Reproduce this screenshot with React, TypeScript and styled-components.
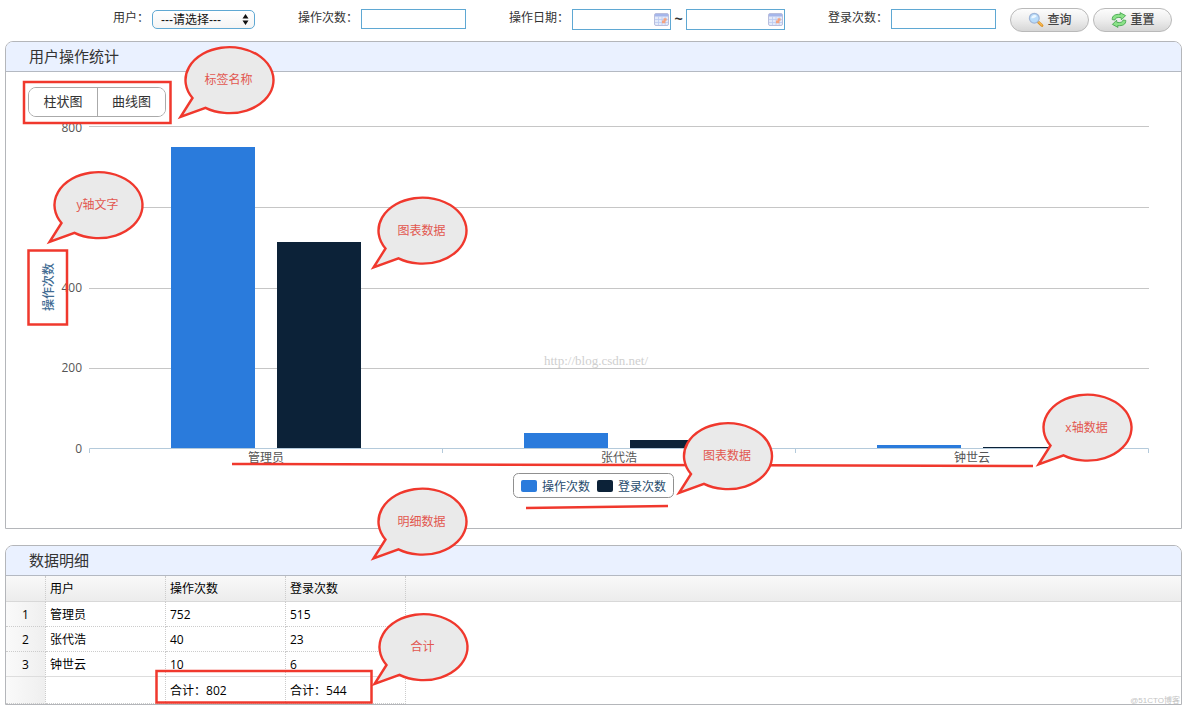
import React from "react";
import styled, { createGlobalStyle } from "styled-components";

const cjk = '"Noto Sans CJK SC", sans-serif';

const GlobalStyle = createGlobalStyle`
  * { box-sizing: border-box; }
  body {
    margin: 0;
    background: #fff;
    color: #333;
    font: 12px/18px "Liberation Sans", ${cjk};
  }
  button, input, select { font: inherit; color: inherit; }
`;

const Page = styled.main`
  display: flex;
  flex-direction: column;
  padding: 0 2px 0 5px;
`;

const FilterBar = styled.form`
  display: flex;
  flex-wrap: wrap;
  align-items: center;
  column-gap: 43px;
  min-height: 41px;
  padding: 0 0 3px 108px;
`;

const Field = styled.div`
  display: flex;
  align-items: center;
  gap: 3px;
`;

const FieldLabel = styled.label`
  padding-bottom: 2px;
  white-space: nowrap;
`;

const TextInput = styled.input`
  width: 105px;
  height: 20px;
  padding: 0 4px;
  border: 1px solid #5fa8d3;
  background: #fff;
  outline: none;
`;

const SelectWrap = styled.div`
  position: relative;
`;

const Select = styled.select`
  display: block;
  width: 103px;
  height: 19px;
  padding: 1px 16px 0 8px;
  border: 1px solid #5fa8d3;
  border-radius: 5px;
  background: linear-gradient(#fff, #f4f4f4);
  color: #111;
  line-height: 16px;
  appearance: none;
`;

const SelectArrows = styled.svg`
  position: absolute;
  top: 4px;
  right: 6px;
  pointer-events: none;
`;

const DateBox = styled.div`
  display: flex;
  align-items: center;
  width: 99px;
  height: 21px;
  padding-right: 1px;
  border: 1px solid #5fa8d3;
`;

const DateInput = styled.input`
  flex: 1;
  min-width: 0;
  height: 18px;
  padding: 0 4px;
  border: 0;
  background: transparent;
  outline: none;
`;

const IconButton = styled.button`
  display: flex;
  padding: 0;
  border: 0;
  background: none;
`;

const Tilde = styled.span`
  width: 9px;
  text-align: center;
  font-size: 14px;
  font-weight: bold;
`;

const LastGroup = styled.div`
  display: flex;
  align-items: center;
  gap: 14px;
`;

const Actions = styled.div`
  display: flex;
  gap: 4px;
  padding-top: 1px;
`;

const PillButton = styled.button`
  display: flex;
  align-items: center;
  justify-content: center;
  gap: 4px;
  width: 79px;
  height: 24px;
  padding: 0;
  border: 1px solid #b9b9b9;
  border-radius: 12px;
  background: linear-gradient(#fdfdfd, #ededed 50%, #d6d6d6);
  color: #444;
  font-weight: 500;
`;

const Panel = styled.section`
  position: relative;
  border: 1px solid #b4b6ba;
  border-radius: 8px 8px 0 0;
  background: #fff;

  & + & { margin-top: 16px; }
`;

const PanelTitle = styled.h2`
  margin: 0;
  height: 30px;
  padding-left: 23px;
  border-bottom: 1px solid #b4b9c2;
  border-radius: 7px 7px 0 0;
  background: #eaf1ff;
  font-size: 15px;
  font-weight: 400;
  line-height: 30px;
`;

const ChartBody = styled.div`
  padding-top: 15px;
`;

const Tabs = styled.div`
  display: inline-flex;
  margin-left: 22px;
  border: 1px solid #aaa;
  border-radius: 8px;
  overflow: hidden;
  vertical-align: top;
`;

const Tab = styled.button`
  width: 68px;
  height: 28px;
  padding: 0;
  border: 0;
  background: #fff;
  font-size: 13px;

  & + & { border-left: 1px solid #aaa; }
`;

const Chart = styled.svg`
  position: relative;
  z-index: 1;
  display: block;
  width: 100%;
  height: auto;
  overflow: visible;
  pointer-events: none;
`;

const AxisText = styled.text`
  fill: #555;
  font: 12px "Open Sans", ${cjk};
`;

const AxisTitle = styled.text`
  fill: #416b92;
  font: 500 12px ${cjk};
`;

const LegendText = styled.text`
  fill: #274b6d;
  font: 12px ${cjk};
`;

const CalloutText = styled.text`
  fill: #e2574f;
  font: 12px "Open Sans", ${cjk};
`;

const SiteMark = styled.text`
  fill: #cfcfcf;
  font: 13px "Liberation Serif", serif;
`;

const DataTable = styled.table`
  width: 100%;
  border-collapse: separate;
  border-spacing: 0;
  table-layout: fixed;
  color: #000;
  font-family: "Open Sans", ${cjk};
  line-height: 18px;
`;

const HeadCell = styled.th`
  height: 26px;
  padding: 0 4px;
  border-right: 1px dotted #ccc;
  border-bottom: 1px solid #d8d8d8;
  background: linear-gradient(#f9f9f9, #ececec);
  font-weight: 400;
  text-align: left;

  &:last-child { border-right: 0; }
`;

const Cell = styled.td<{ $last?: boolean }>`
  height: 25px;
  padding: 2px 4px 0;
  border-right: 1px dotted #ccc;
  border-bottom: 1px ${(p) => (p.$last ? "solid #ddd" : "dotted #ccc")};

  tfoot & { height: 27px; }
`;

const IndexCell = styled(Cell)`
  background: linear-gradient(90deg, #fafafa, #efefef);
  text-align: center;
`;

const RestCell = styled.td<{ $last?: boolean }>`
  padding: 0;
  border-bottom: ${(p) => (p.$last ? "1px solid #ddd" : "0")};
`;

const TotalsMarkup = styled.svg`
  position: absolute;
  top: 0;
  left: 0;
  overflow: visible;
  pointer-events: none;
`;

const CornerMark = styled.span`
  position: absolute;
  right: 1px;
  bottom: -4px;
  color: #c4c4c4;
  font-size: 8px;
  line-height: 14px;
`;

const RED = "#f0382d";
const BLUE = "#2a7bdc";
const NAVY = "#0c2238";

const users = [
  { name: "管理员", ops: 752, logins: 515 },
  { name: "张代浩", ops: 40, logins: 23 },
  { name: "钟世云", ops: 10, logins: 6 },
];
const totalOps = users.reduce((sum, u) => sum + u.ops, 0);
const totalLogins = users.reduce((sum, u) => sum + u.logins, 0);

const plot = { left: 89, right: 1149, top: 126, bottom: 448 };
const band = Math.floor((plot.right - plot.left) / users.length);
const unit = (plot.bottom - plot.top) / 800;
const barHeight = (v: number) => Math.max(1, Math.floor(v * unit - 0.9));

function Callout({ x, y, text }: { x: number; y: number; text: string }) {
  return (
    <g transform={`translate(${x} ${y})`}>
      <path
        d="M-36 18A44 33 0 1 1 -23 27.8L-48 37Z"
        fill="#eaeaea"
        stroke={RED}
        strokeWidth="2.4"
        strokeMiterlimit="8"
      />
      <CalloutText textAnchor="middle" y="4">{text}</CalloutText>
    </g>
  );
}

function CalendarIcon() {
  return (
    <svg width="15" height="13" viewBox="0 0 15 13">
      <rect x=".5" y=".5" width="14" height="12" rx="1.5" fill="#e3eafa" stroke="#b9bedd" />
      <path d="M1 1h13v2.5H1z" fill="#a5b6ea" />
      <path d="M1 6.5h13M1 9.5h13M4.5 3.5V12M8 3.5V12M11.2 3.5V12" stroke="#bccaf0" strokeWidth=".8" />
      <path d="M9.6 5.2h3v2.6h-1.2v2.4H8V7.6h1.6z" fill="#f4a381" />
    </svg>
  );
}

function SearchIcon() {
  return (
    <svg width="16" height="16" viewBox="0 0 16 16">
      <path d="M10.2 10l3.8 3.6" stroke="#d9922b" strokeWidth="2.8" strokeLinecap="round" />
      <path d="M10.6 10l3.2 3" stroke="#f8b84c" strokeWidth="1.5" strokeLinecap="round" />
      <circle cx="6.3" cy="6.2" r="4.9" fill="#b9dcfa" stroke="#9fb6d8" strokeWidth="1.2" />
      <path d="M3.2 6.2a3.3 3.3 0 0 1 5.6-2.3C7.5 5.6 5.6 6.3 3.2 6.2z" fill="#ecf7ff" />
    </svg>
  );
}

function ResetIcon() {
  return (
    <svg width="16" height="16" viewBox="0 0 16 16" fill="#8be388" stroke="#4aa654" strokeWidth=".9" strokeLinejoin="round">
      <path d="M1.2 7.6C1 3.6 4.4 1.9 9.4 2.4L9 .6l5.6 3-4.2 4.2-.3-2.2C6.6 5.2 4.4 5.6 3.9 8z" />
      <path d="M14.8 8.4c.2 4-3.2 5.7-8.2 5.2l.4 1.8-5.6-3 4.2-4.2.3 2.2c3.5.4 5.700 0 6.200-2.400z" />
    </svg>
  );
}

function DateField({ id, label }: { id: string; label: string }) {
  return (
    <DateBox>
      <DateInput id={id} type="text" aria-label={label} />
      <IconButton type="button" aria-label="选择日期"><CalendarIcon /></IconButton>
    </DateBox>
  );
}

function Filters() {
  return (
    <FilterBar onSubmit={(e) => e.preventDefault()}>
      <Field>
        <FieldLabel htmlFor="user">用户：</FieldLabel>
        <SelectWrap>
          <Select id="user">
            <option>---请选择---</option>
          </Select>
          <SelectArrows width="7" height="11" viewBox="0 0 7 11">
            <path d="M3.5 0L6.5 4.5h-6zM3.5 11L.5 6.5h6z" fill="#111" />
          </SelectArrows>
        </SelectWrap>
      </Field>
      <Field>
        <FieldLabel htmlFor="ops">操作次数：</FieldLabel>
        <TextInput id="ops" />
      </Field>
      <Field>
        <FieldLabel htmlFor="from">操作日期：</FieldLabel>
        <DateField id="from" label="操作日期" />
        <Tilde>~</Tilde>
        <DateField id="to" label="操作日期" />
      </Field>
      <LastGroup>
        <Field>
          <FieldLabel htmlFor="logins">登录次数：</FieldLabel>
          <TextInput id="logins" />
        </Field>
        <Actions>
          <PillButton type="submit"><SearchIcon />查询</PillButton>
          <PillButton type="reset"><ResetIcon />重置</PillButton>
        </Actions>
      </LastGroup>
    </FilterBar>
  );
}

function StatsChart() {
  return (
    <Chart viewBox="6 117 1175 411">
      {[126, 207, 288, 368].map((y) => (
        <path key={y} d={`M${plot.left} ${y + 0.5}H${plot.right}`} stroke="#c6c6c6" />
      ))}
      {users.map((u, i) => {
        const x = plot.left + band * i + 82;
        return (
          <g key={u.name}>
            <rect x={x} y={plot.bottom - barHeight(u.ops)} width="84" height={barHeight(u.ops)} fill={BLUE} />
            <rect x={x + 106} y={plot.bottom - barHeight(u.logins)} width="84" height={barHeight(u.logins)} fill={NAVY} />
            <AxisText x={x + 95} y="462" textAnchor="middle">{u.name}</AxisText>
          </g>
        );
      })}
      <path d="M89.5 453V448.5H1148.5V453M442.5 448V453M795.5 448V453" fill="none" stroke="#b4cadb" />
      <AxisText x="82" y="132" textAnchor="end">800</AxisText>
      <AxisText x="82" y="292" textAnchor="end">400</AxisText>
      <AxisText x="82" y="372" textAnchor="end">200</AxisText>
      <AxisText x="82" y="453" textAnchor="end">0</AxisText>
      <AxisTitle transform="translate(53 287) rotate(-90)" textAnchor="middle">操作次数</AxisTitle>

      <rect x="513.5" y="473.5" width="160" height="24" rx="5" fill="#fff" stroke="#909090" />
      <rect x="521" y="480" width="16" height="12" rx="2" fill={BLUE} />
      <LegendText x="542" y="491">操作次数</LegendText>
      <rect x="597" y="480" width="16" height="12" rx="2" fill={NAVY} />
      <LegendText x="618" y="491">登录次数</LegendText>
      <SiteMark x="544" y="365">http://blog.csdn.net/</SiteMark>

      <g fill="none" stroke={RED} strokeWidth="2.5">
        <rect x="24" y="82" width="146.5" height="41" />
        <rect x="28.5" y="250.5" width="38.5" height="74" />
        <path d="M232 464L1033 466M526 508L668 506" />
      </g>
      <Callout x={228.5} y={80} text="标签名称" />
      <Callout x={97.5} y={205} text="y轴文字" />
      <Callout x={421.5} y={230.5} text="图表数据" />
      <Callout x={727} y={456} text="图表数据" />
      <Callout x={1086.5} y={427.5} text="x轴数据" />
      <Callout x={421.5} y={521.5} text="明细数据" />
    </Chart>
  );
}

function DetailTable() {
  return (
    <DataTable>
      <colgroup>
        <col width="40" />
        <col width="120" />
        <col width="120" />
        <col width="120" />
        <col />
      </colgroup>
      <thead>
        <tr>
          <HeadCell />
          <HeadCell scope="col">用户</HeadCell>
          <HeadCell scope="col">操作次数</HeadCell>
          <HeadCell scope="col">登录次数</HeadCell>
          <HeadCell />
        </tr>
      </thead>
      <tbody>
        {users.map((u, i) => {
          const last = i === users.length - 1;
          return (
            <tr key={u.name}>
              <IndexCell $last={last}>{i + 1}</IndexCell>
              <Cell $last={last}>{u.name}</Cell>
              <Cell $last={last}>{u.ops}</Cell>
              <Cell $last={last}>{u.logins}</Cell>
              <RestCell $last={last} />
            </tr>
          );
        })}
      </tbody>
      <tfoot>
        <tr>
          <IndexCell />
          <Cell />
          <Cell>合计：{totalOps}</Cell>
          <Cell>合计：{totalLogins}</Cell>
          <RestCell />
        </tr>
      </tfoot>
    </DataTable>
  );
}

export default function App() {
  return (
    <>
      <GlobalStyle />
      <Page>
        <Filters />
        <Panel>
          <PanelTitle>用户操作统计</PanelTitle>
          <ChartBody>
            <Tabs>
              <Tab type="button">柱状图</Tab>
              <Tab type="button">曲线图</Tab>
            </Tabs>
            <StatsChart />
          </ChartBody>
        </Panel>
        <Panel>
          <PanelTitle>数据明细</PanelTitle>
          <DetailTable />
          <TotalsMarkup width="480" height="160" viewBox="6 546 480 160">
            <rect x="156.5" y="671" width="215" height="31.5" fill="none" stroke={RED} strokeWidth="2.5" />
            <Callout x={422.5} y={647} text="合计" />
          </TotalsMarkup>
          <CornerMark>@51CTO博客</CornerMark>
        </Panel>
      </Page>
    </>
  );
}
